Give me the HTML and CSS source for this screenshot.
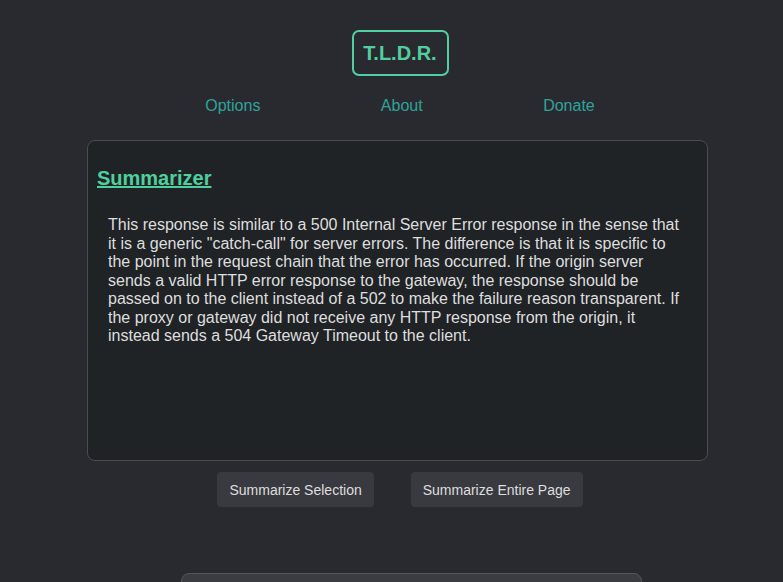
FILE: index.html
```html
<!DOCTYPE html>
<html>
<head>
<meta charset="utf-8">
<link rel="stylesheet" href="styles.css">
</head>
<body>
<div class="page">
  <header class="header">
    <div class="logo">T.L.D.R.</div>
    <nav class="nav">
      <a class="nav-link">Options</a>
      <a class="nav-link">About</a>
      <a class="nav-link">Donate</a>
    </nav>
  </header>
  <section class="panel">
    <h2 class="panel-title">Summarizer</h2>
    <p class="summary">This response is similar to a 500 Internal Server Error response in the sense that it is a generic "catch-call" for server errors. The difference is that it is specific to the point in the request chain that the error has occurred. If the origin server sends a valid HTTP error response to the gateway, the response should be passed on to the client instead of a 502 to make the failure reason transparent. If the proxy or gateway did not receive any HTTP response from the origin, it instead sends a 504 Gateway Timeout to the client.</p>
  </section>
  <div class="actions">
    <button class="btn">Summarize Selection</button>
    <button class="btn">Summarize Entire Page</button>
  </div>
  <div class="bottom-card"></div>
</div>
</body>
</html>
```

FILE: styles.css
```css
html, body {
  margin: 0;
  padding: 0;
  background: #292a2f;
  overflow: hidden;
  height: 582px;
}
body {
  font-family: "Liberation Sans", Arial, sans-serif;
  color: #dcdcdc;
}
.page {
  width: 800px;
  display: flex;
  flex-direction: column;
  align-items: center;
}
.header {
  display: flex;
  flex-direction: column;
  align-items: center;
  padding-top: 30px;
}
.logo {
  box-sizing: border-box;
  height: 46px;
  width: 97px;
  border: 2px solid #52cf9f;
  border-radius: 7px;
  color: #52cf9f;
  font-weight: bold;
  font-size: 20px;
  display: flex;
  align-items: center;
  justify-content: center;
}
.nav {
  width: 510px;
  display: flex;
  justify-content: space-around;
  margin-top: 20px;
}
.nav-link {
  color: #2fa39a;
  font-size: 16px;
  line-height: 19px;
}
.panel {
  box-sizing: border-box;
  width: 621px;
  height: 321px;
  margin: 25px 5px 0 0;
  background: #202326;
  border: 1px solid #4b4c51;
  border-radius: 8px;
  padding: 0 0 0 9px;
}
.panel-title {
  margin: 26px 0 0 0;
  font-size: 20px;
  line-height: 23px;
  color: #4fcf9d;
  text-decoration: underline;
  font-weight: bold;
}
.summary {
  margin: 26px 0 0 11px;
  padding-right: 24px;
  font-size: 16px;
  line-height: 18.5px;
  color: #dedede;
}
.actions {
  display: flex;
  gap: 37px;
  margin-top: 11px;
}
.btn {
  height: 35px;
  padding: 0 12px;
  border: none;
  border-radius: 4px;
  background: #393a3f;
  color: #dedede;
  font-family: "Liberation Sans", Arial, sans-serif;
  font-size: 14px;
}
.bottom-card {
  box-sizing: border-box;
  width: 461px;
  height: 60px;
  margin: 66px 0 0 22px;
  background: #3b3c41;
  border: 1px solid #55565b;
  border-radius: 8px;
}
```
